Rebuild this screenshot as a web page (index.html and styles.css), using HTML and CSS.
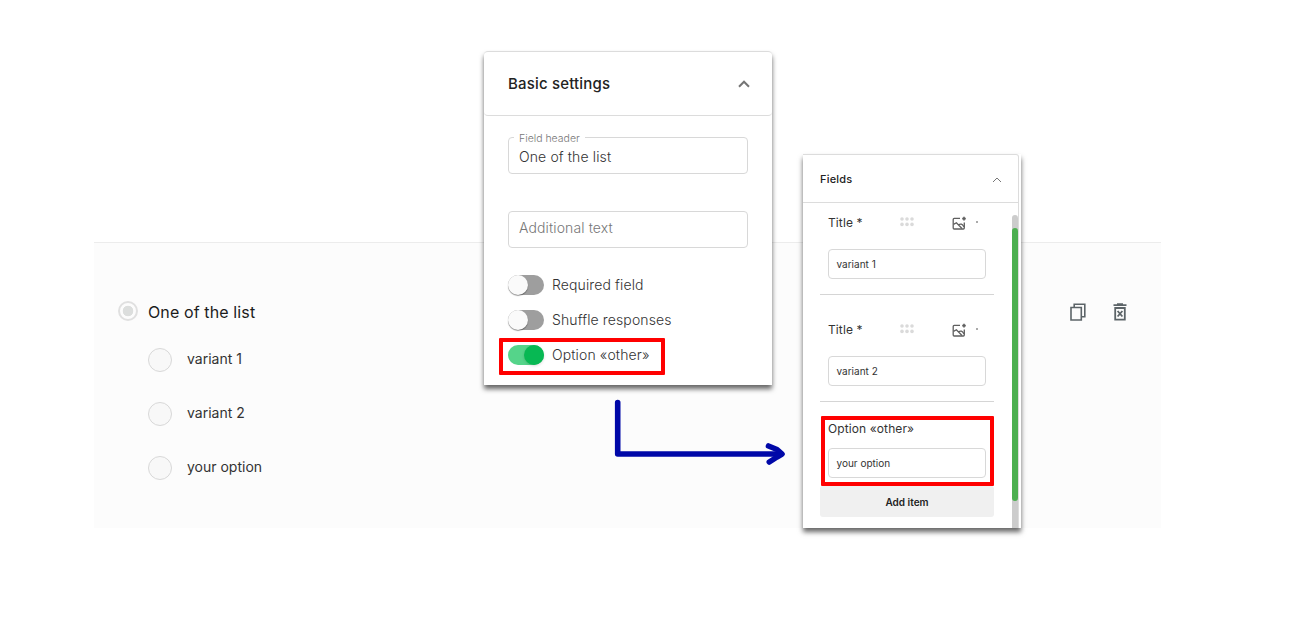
FILE: index.html
```html
<!DOCTYPE html>
<html lang="en">
<head>
    <meta charset="UTF-8">
    <meta name="viewport" content="width=device-width, initial-scale=1.0">
    <title>Form builder - Option other</title>
    <link rel="stylesheet" href="styles.css">
</head>
<body>
    <section class="preview">
        <div class="question">
            <div class="question-title">
                <span class="type-icon"></span>
                <h1>One of the list</h1>
            </div>
            <div class="answer"><span class="radio"></span><span class="text">variant 1</span></div>
            <div class="answer"><span class="radio"></span><span class="text">variant 2</span></div>
            <div class="answer"><span class="radio"></span><span class="text">your option</span></div>
        </div>
        <div class="actions">
            <svg width="16" height="18" viewBox="0 0 16 18" fill="none" stroke="#5c6468" stroke-width="1.6">
                <path d="M4.2 4V1.2H14.8V13.8H12"/>
                <path d="M1 4.5H11.3V17H1Z"/>
            </svg>
            <svg width="14" height="18" viewBox="0 0 14 18" fill="none" stroke="#5c6468" stroke-width="1.8">
                <path d="M0.5 2.2H13.5M4 1.2H10"/>
                <path d="M2.2 5H11.8V16.6H2.2Z"/>
                <path d="M4.6 8L9.4 13.5M9.4 8L4.6 13.5"/>
            </svg>
        </div>
    </section>

    <div class="panel settings">
        <div class="panel-header">
            <h2>Basic settings</h2>
            <svg width="12" height="8" viewBox="0 0 12 8" fill="none" stroke="#757575" stroke-width="2">
                <path d="M1 6.7L6 1.7L11 6.7"/>
            </svg>
        </div>
        <div class="settings-body">
            <div class="field">
                <label>Field header</label>
                <span class="value">One of the list</span>
            </div>
            <div class="field empty"><span class="value">Additional text</span></div>
            <div class="switches">
                <div class="switch-row"><span class="switch"></span><span class="text">Required field</span></div>
                <div class="switch-row"><span class="switch"></span><span class="text">Shuffle responses</span></div>
                <div class="switch-row marked"><span class="switch on"></span><span class="text">Option «other»</span></div>
            </div>
        </div>
    </div>

    <svg class="arrow" width="180" height="76" viewBox="0 0 180 76" fill="none" stroke="#0008a8" stroke-width="5.6" stroke-linecap="round" stroke-linejoin="round">
        <path d="M7.7 7.5V59H171"/>
        <path d="M158.5 51L167 54.5L172 59L167 62L159.3 67"/>
    </svg>

    <div class="panel fields">
        <div class="panel-header">
            <h2>Fields</h2>
            <svg width="10" height="6" viewBox="0 0 10 6" fill="none" stroke="#777" stroke-width="1">
                <path d="M1 5L5 1L9 5"/>
            </svg>
        </div>
        <div class="fields-body">
            <div class="list">
                <div class="item">
                    <div class="item-title">
                        <span class="name">Title *</span>
                        <svg class="grip" width="14" height="10" viewBox="0 0 14 10" fill="#dadada">
                            <circle cx="2" cy="2" r="1.8"/><circle cx="7" cy="2" r="1.8"/><circle cx="12" cy="2" r="1.8"/>
                            <circle cx="2" cy="7.4" r="1.8"/><circle cx="7" cy="7.4" r="1.8"/><circle cx="12" cy="7.4" r="1.8"/>
                        </svg>
                        <svg class="image" width="14" height="14" viewBox="0 0 14 14" fill="none" stroke="#5f5f5f" stroke-width="1.3">
                            <path d="M8 2.4H2.2Q1.2 2.4 1.2 3.4V12Q1.2 13 2.2 13H11.3Q12.3 13 12.3 12V6.5"/>
                            <path d="M1.5 8.4L4.4 6.7L10 12.5M6.7 8.8Q9.4 6.6 12 10.8"/>
                            <path d="M12 0.8V4.4M10.2 2.6H13.8" stroke-width="1.6"/>
                        </svg>
                        <span class="dot"></span>
                    </div>
                    <div class="input">variant 1</div>
                </div>
                <div class="item">
                    <div class="item-title">
                        <span class="name">Title *</span>
                        <svg class="grip" width="14" height="10" viewBox="0 0 14 10" fill="#dadada">
                            <circle cx="2" cy="2" r="1.8"/><circle cx="7" cy="2" r="1.8"/><circle cx="12" cy="2" r="1.8"/>
                            <circle cx="2" cy="7.4" r="1.8"/><circle cx="7" cy="7.4" r="1.8"/><circle cx="12" cy="7.4" r="1.8"/>
                        </svg>
                        <svg class="image" width="14" height="14" viewBox="0 0 14 14" fill="none" stroke="#5f5f5f" stroke-width="1.3">
                            <path d="M8 2.4H2.2Q1.2 2.4 1.2 3.4V12Q1.2 13 2.2 13H11.3Q12.3 13 12.3 12V6.5"/>
                            <path d="M1.5 8.4L4.4 6.7L10 12.5M6.7 8.8Q9.4 6.6 12 10.8"/>
                            <path d="M12 0.8V4.4M10.2 2.6H13.8" stroke-width="1.6"/>
                        </svg>
                        <span class="dot"></span>
                    </div>
                    <div class="input">variant 2</div>
                </div>
                <div class="other">
                    <span class="name">Option «other»</span>
                    <div class="input">your option</div>
                </div>
                <button type="button">Add item</button>
            </div>
            <div class="scrollbar"><div class="thumb"></div></div>
        </div>
    </div>
</body>
</html>
```
FILE: styles.css
```css
*, *::before, *::after {
    box-sizing: border-box;
}

body {
    margin: 0;
    height: 634px;
    padding-top: 242px;
    position: relative;
    overflow: hidden;
    background-color: #fff;
    font-family: Inter, "Liberation Sans", sans-serif;
    color: #333;
}

h1, h2 {
    margin: 0;
}

svg {
    display: block;
}

/* form preview */
.preview {
    display: flex;
    justify-content: space-between;
    width: 1067px;
    height: 286px;
    margin-left: 94px;
    padding: 56px 34px 0 24px;
    background-color: #fcfcfc;
    border-top: 1px solid #ececec;
}

.question-title {
    display: flex;
    align-items: center;
    gap: 10px;
    height: 24px;
    margin-bottom: 25px;
}

.question-title h1 {
    font-size: 16px;
    font-weight: 400;
    letter-spacing: 0.12px;
    color: #1c1c1c;
    padding-top: 1px;
}

.type-icon {
    width: 20px;
    height: 20px;
    margin-top: -1px;
    border: 2px solid #e0e0e0;
    border-radius: 50%;
    background: radial-gradient(circle, #dcdedd 5px, #fcfcfc 5.6px);
}

.answer {
    display: flex;
    align-items: center;
    gap: 15px;
    height: 24px;
    margin: 0 0 30px 30px;
    font-size: 14px;
}

.answer .text {
    padding-bottom: 3px;
}

.radio {
    width: 24px;
    height: 24px;
    border: 1px solid #d8d8d8;
    border-radius: 50%;
    background-color: #f8f8f8;
}

.actions {
    display: flex;
    gap: 27px;
    padding-top: 4px;
}

/* floating panels */
.panel {
    position: absolute;
    background-color: #fff;
    box-shadow: 0 4px 5px rgba(0, 0, 0, 0.6);
}

.panel-header {
    display: flex;
    align-items: center;
    justify-content: space-between;
    border: 1px solid #dcdcdc;
    border-width: 1px 0;
}

.settings {
    left: 484px;
    top: 51px;
    width: 288px;
    height: 334px;
    border-radius: 4px 4px 0 0;
}

.settings .panel-header {
    height: 65px;
    padding: 0 22px 0 24px;
    border-radius: 4px;
}

.settings h2 {
    font-size: 15px;
    font-weight: 500;
    letter-spacing: 0.18px;
    color: #222;
}

.settings-body {
    display: flex;
    flex-direction: column;
    gap: 37px;
    padding: 21px 24px 0;
}

.field {
    position: relative;
    height: 37px;
    padding: 10px 10px 0;
    border: 1px solid #d8d8d8;
    border-radius: 4px;
    font-size: 14px;
    font-weight: 300;
    line-height: 17px;
    letter-spacing: 0.12px;
}

.field.empty {
    padding-top: 7px;
    color: #777;
}

.field label {
    position: absolute;
    top: -6px;
    left: 5px;
    padding: 0 5px;
    background-color: #fff;
    font-size: 10.5px;
    line-height: 14px;
    letter-spacing: 0;
    color: #777;
}

.switches {
    display: flex;
    flex-direction: column;
    gap: 15px;
    margin-top: -10px;
}

.switch-row {
    position: relative;
    display: flex;
    align-items: center;
    gap: 8px;
    height: 20px;
    font-size: 14px;
    font-weight: 300;
    letter-spacing: 0.12px;
}

.switch-row .text {
    padding-bottom: 2px;
}

.switch {
    display: flex;
    width: 36px;
    height: 20px;
    border-radius: 10px;
    background-color: #9e9e9e;
}

.switch::before {
    content: '';
    width: 20px;
    height: 20px;
    border-radius: 50%;
    background-color: #fafafa;
    box-shadow: 0 1px 1px rgba(0, 0, 0, 0.4);
}

.switch.on {
    justify-content: flex-end;
    background-color: #55d48a;
}

.switch.on::before {
    background-color: #07b853;
    box-shadow: 0 1px 3px rgba(0, 0, 0, 0.15);
}

/* red frame round the option */
.marked::after {
    content: '';
    position: absolute;
    top: -7px;
    left: -9px;
    width: 166px;
    height: 37px;
    border: 4px solid #f00;
    border-radius: 1px;
}

.arrow {
    position: absolute;
    left: 610px;
    top: 395px;
}

.fields {
    display: flex;
    flex-direction: column;
    left: 803px;
    top: 154px;
    width: 218px;
    height: 374px;
    padding-right: 2px;
}

.fields .panel-header {
    height: 49px;
    padding: 2px 16px 0 17px;
    border-right-width: 1px;
    border-radius: 0 3px 0 0;
}

.fields h2 {
    font-size: 11px;
    font-weight: 500;
    letter-spacing: 0.2px;
    color: #222;
    padding-bottom: 2px;
}

.fields-body {
    display: flex;
    flex: 1;
    justify-content: space-between;
    padding-left: 17px;
    border-right: 1px solid #dcdcdc;
}

.fields-body .list {
    width: 174px;
}

.item {
    height: 92px;
    margin-bottom: 15px;
    padding: 0 8px;
    border-bottom: 1px solid #d5d5d5;
}

.item-title {
    display: flex;
    align-items: center;
    height: 40px;
    margin-bottom: 6px;
}

.name {
    font-size: 12px;
    line-height: 16px;
    letter-spacing: 0.1px;
}

.item-title .name {
    width: 72px;
}

.item-title .grip {
    margin-bottom: 2px;
}

.item-title .image {
    margin: 0 0 1px 38px;
}

.dot {
    width: 2px;
    height: 2px;
    margin: 0 0 2px 10px;
    background-color: #aaa;
}

.input {
    height: 30px;
    padding-left: 7.5px;
    border: 1px solid #d8d8d8;
    border-radius: 4px;
    font-size: 10px;
    line-height: 29px;
}

.other {
    height: 70px;
    margin: -1px 0 0 1px;
    padding: 0 4px 0 3px;
    border: 4px solid #f00;
    border-radius: 1px;
}

.other .name {
    display: block;
    margin: 1px 0 11px;
}

button {
    display: block;
    width: 174px;
    height: 31px;
    padding: 1px 0 0;
    border: none;
    border-radius: 3px;
    background-color: #f0f0f0;
    font-family: inherit;
    font-size: 10px;
    font-weight: 600;
    color: #222;
}

.scrollbar {
    width: 6px;
    margin-top: 12px;
    padding-top: 13px;
    border-radius: 3px 3px 0 0;
    background-color: #ccc;
}

.thumb {
    height: 273px;
    border-radius: 3px;
    background-color: #4caf50;
}
```
